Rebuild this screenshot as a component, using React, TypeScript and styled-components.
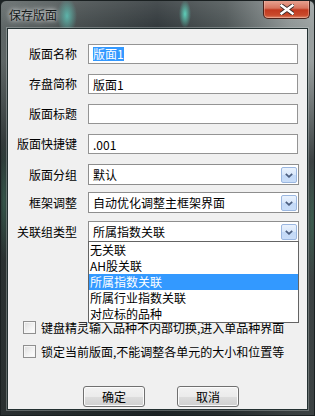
import React from "react";
import styled, { createGlobalStyle } from "styled-components";

const GlobalStyle = createGlobalStyle`
  html, body {
    margin: 0;
    padding: 0;
    background: #1c2324;
  }
  body {
    font-family: "Noto Sans CJK SC", "Noto Sans", sans-serif;
    font-size: 12px;
  }
`;

const font = `"Noto Sans CJK SC", "Noto Sans", sans-serif`;

const Window = styled.div`
  width: 315px;
  height: 416px;
  box-sizing: border-box;
  display: flex;
  flex-direction: column;
  border: 1px solid #1a2021;
  border-radius: 6px 6px 0 0;
  overflow: hidden;
  background:
    radial-gradient(ellipse 10px 18px at 66px 15px, rgba(96, 210, 196, 0.75), transparent),
    radial-gradient(ellipse 6px 14px at 184px 13px, rgba(96, 220, 196, 0.9), transparent),
    radial-gradient(ellipse 5px 60px at 3px 200px, rgba(60, 110, 90, 0.6), transparent),
    radial-gradient(ellipse 5px 60px at 311px 220px, rgba(60, 120, 90, 0.5), transparent),
    linear-gradient(180deg, rgba(255, 255, 255, 0.12) 0, transparent 30px),
    linear-gradient(180deg, transparent 0, transparent 60px, rgba(20, 26, 27, 0.7) 160px),
    linear-gradient(90deg, #5e6666 0%, #444b4c 25%, #30373a 50%, #4c5455 72%, #8d9494 92%, #9aa0a0 100%);
`;

const TitleBar = styled.div`
  height: 27px;
  display: flex;
  align-items: flex-start;
  justify-content: space-between;
  padding-left: 8px;
  padding-right: 4px;
`;

const Title = styled.span`
  margin-top: 6px;
  font-family: ${font};
  font-size: 12px;
  line-height: 16px;
  color: #141a1a;
  text-shadow: 0 0 4px rgba(255, 255, 255, 0.9), 0 0 8px rgba(255, 255, 255, 0.6);
`;

const CloseButton = styled.div`
  width: 47px;
  height: 19px;
  margin-top: -1px;
  box-sizing: border-box;
  border: 1px solid #4a2119;
  border-top: none;
  border-radius: 0 0 5px 5px;
  background: linear-gradient(180deg, #e9a796 0%, #d7755f 45%, #c2391f 55%, #c94a2c 85%, #df8a6f 100%);
  box-shadow: inset 0 0 0 1px rgba(255, 220, 210, 0.35);
  display: flex;
  align-items: center;
  justify-content: center;
`;

const Client = styled.div`
  flex: 1;
  margin: 0 6px 5px 6px;
  border: 1px solid #233031;
  box-shadow: 0 0 0 1px rgba(200, 210, 210, 0.35);
  background: #f0f0f0;
  display: flex;
  flex-direction: column;
  padding: 15px 9px 0 0;
`;

const Row = styled.div<{ $mt?: number }>`
  display: grid;
  grid-template-columns: 69px 1fr;
  column-gap: 11px;
  align-items: center;
  margin-top: ${(p) => p.$mt ?? 0}px;
`;

const Label = styled.span`
  text-align: right;
  font-family: ${font};
  font-size: 12px;
  line-height: 16px;
  color: #000;
  white-space: nowrap;
`;

const TextBox = styled.div`
  height: 20px;
  box-sizing: border-box;
  border: 1px solid #949494;
  background: #fff;
  padding-left: 4px;
  display: flex;
  align-items: center;
  font-family: ${font};
  font-size: 12px;
  color: #000;
`;

const Selected = styled.span`
  background: #3399ff;
  color: #fff;
  line-height: 14px;
`;

const SelectBox = styled.div`
  position: relative;
  height: 21px;
  margin-right: -1px;
  box-sizing: border-box;
  border: 1px solid #8e8e8e;
  background: #fff;
  padding-left: 4px;
  display: flex;
  align-items: center;
  font-family: ${font};
  font-size: 12px;
  color: #000;
`;

const SelectValue = styled.span`
  flex: 1;
  white-space: nowrap;
`;

const ArrowButton = styled.div`
  width: 16px;
  height: 16px;
  margin: 1px 1px 0 0;
  box-sizing: border-box;
  border: 1px solid #9bb7e0;
  border-radius: 2px;
  background: linear-gradient(180deg, #eaf2fd 0%, #d8e7fb 50%, #c3d9f7 51%, #c9ddf8 100%);
  display: flex;
  align-items: center;
  justify-content: center;
`;

const DropList = styled.ul`
  position: absolute;
  top: 100%;
  left: -1px;
  right: -1px;
  margin: 0;
  padding: 0;
  list-style: none;
  box-sizing: border-box;
  border: 1px solid #646464;
  background: #fff;
  z-index: 2;
`;

const DropItem = styled.li<{ $active?: boolean }>`
  height: 16px;
  line-height: 16px;
  padding-left: 1px;
  font-family: ${font};
  font-size: 12px;
  white-space: nowrap;
  color: ${(p) => (p.$active ? "#fff" : "#000")};
  background: ${(p) => (p.$active ? "#3399ff" : "transparent")};
`;

const CheckRow = styled.label<{ $mt: number }>`
  display: flex;
  align-items: center;
  gap: 5px;
  margin-top: ${(p) => p.$mt}px;
  padding-left: 15px;
  height: 13px;
  font-family: ${font};
  font-size: 12px;
  color: #000;
  white-space: nowrap;
`;

const CheckBox = styled.span`
  width: 13px;
  height: 13px;
  flex: none;
  box-sizing: border-box;
  border: 1px solid #8f8f8f;
  background: linear-gradient(135deg, #dcdcdc 0%, #f4f4f4 60%, #ffffff 100%);
  box-shadow: inset 0 0 0 1px #f6f6f6;
`;

const ButtonRow = styled.div`
  display: flex;
  gap: 32px;
  padding-left: 75px;
  margin-top: 28px;
`;

const Button = styled.button`
  width: 62px;
  height: 21px;
  padding: 0;
  box-sizing: border-box;
  border: 1px solid #707070;
  border-radius: 3px;
  background: linear-gradient(180deg, #f2f2f2 0%, #ebebeb 50%, #dddddd 51%, #cfcfcf 100%);
  box-shadow: inset 0 0 0 1px #fbfbfb;
  font-family: ${font};
  font-size: 12px;
  color: #000;
  line-height: 17px;
`;

const Chevron = () => (
  <svg width="8" height="5" viewBox="0 0 8 5">
    <path d="M0.8 0.8 L4 3.8 L7.2 0.8" fill="none" stroke="#4d5f80" strokeWidth="1.8" />
  </svg>
);

const CloseX = () => (
  <svg width="14" height="11" viewBox="0 0 14 11">
    <path
      d="M1.5 1.5 L12.5 9.5 M12.5 1.5 L1.5 9.5"
      stroke="#3b2a28"
      strokeWidth="4.2"
      strokeLinecap="square"
    />
    <path d="M1.5 1.5 L12.5 9.5 M12.5 1.5 L1.5 9.5" stroke="#ffffff" strokeWidth="2.4" strokeLinecap="square" />
  </svg>
);

const linkTypes = ["无关联", "AH股关联", "所属指数关联", "所属行业指数关联", "对应标的品种"];

export default function App() {
  return (
    <>
      <GlobalStyle />
      <Window>
        <TitleBar>
          <Title>保存版面</Title>
          <CloseButton>
            <CloseX />
          </CloseButton>
        </TitleBar>
        <Client>
          <Row>
            <Label>版面名称</Label>
            <TextBox>
              <Selected>版面1</Selected>
            </TextBox>
          </Row>
          <Row $mt={10}>
            <Label>存盘简称</Label>
            <TextBox>版面1</TextBox>
          </Row>
          <Row $mt={10}>
            <Label>版面标题</Label>
            <TextBox />
          </Row>
          <Row $mt={10}>
            <Label>版面快捷键</Label>
            <TextBox>.001</TextBox>
          </Row>
          <Row $mt={10}>
            <Label>版面分组</Label>
            <SelectBox>
              <SelectValue>默认</SelectValue>
              <ArrowButton>
                <Chevron />
              </ArrowButton>
            </SelectBox>
          </Row>
          <Row $mt={7}>
            <Label>框架调整</Label>
            <SelectBox>
              <SelectValue>自动优化调整主框架界面</SelectValue>
              <ArrowButton>
                <Chevron />
              </ArrowButton>
            </SelectBox>
          </Row>
          <Row $mt={8}>
            <Label>关联组类型</Label>
            <SelectBox>
              <SelectValue>所属指数关联</SelectValue>
              <ArrowButton>
                <Chevron />
              </ArrowButton>
              <DropList>
                {linkTypes.map((t) => (
                  <DropItem key={t} $active={t === "所属指数关联"}>
                    {t}
                  </DropItem>
                ))}
              </DropList>
            </SelectBox>
          </Row>
          <CheckRow $mt={79}>
            <CheckBox />
            键盘精灵输入品种不内部切换,进入单品种界面
          </CheckRow>
          <CheckRow $mt={11}>
            <CheckBox />
            锁定当前版面,不能调整各单元的大小和位置等
          </CheckRow>
          <ButtonRow>
            <Button>确定</Button>
            <Button>取消</Button>
          </ButtonRow>
        </Client>
      </Window>
    </>
  );
}
